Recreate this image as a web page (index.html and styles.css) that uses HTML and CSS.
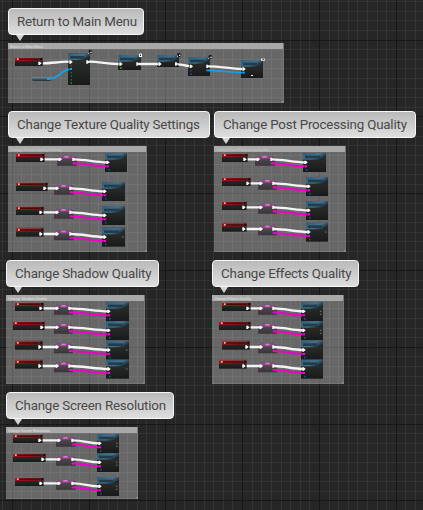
FILE: index.html
```html
<!DOCTYPE html>
<html lang="en">
<head>
<meta charset="utf-8">
<title>Event Graph</title>
<link rel="stylesheet" href="styles.css">
</head>
<body>
<main class="canvas" id="canvas">
  <svg class="layer" id="grid" viewBox="0 0 423 510"></svg>
</main>
<script src="graph.js"></script>
</body>
</html>
```
FILE: styles.css
```css
body { margin: 0; background: #262626; overflow: hidden; }
.canvas { position: relative; width: 423px; height: 510px; overflow: hidden; background: #262626; font-family: Roboto, "Liberation Sans", sans-serif; }
.layer { position: absolute; left: 0; top: 0; width: 423px; height: 510px; display: block; }
.minor { fill: #343434; }
.major { fill: #171717; }
.frame { position: absolute; box-sizing: border-box; background: rgba(255, 255, 255, 0.3); border-right: 1px solid rgba(160, 160, 160, 0.25); border-bottom: 1px solid rgba(160, 160, 160, 0.25); }
.frame-head { height: 6px; background: #a9a9a9; }
.frame-title { fill: #e2e2e2; font: 3.6px Roboto, sans-serif; }
.frame-title.faint { opacity: 0.5; }
.frame-head svg { display: block; width: 100%; height: 6px; }
.bubble { position: absolute; box-sizing: border-box; height: 27px; border: 1px solid #f6f6f6; border-radius: 4px; background: linear-gradient(#b9b9b9, #dedede); color: #484848; font-size: 13.33px; line-height: 25px; padding-left: 8px; white-space: nowrap; letter-spacing: -0.19px; }
.bubble::after { content: ""; position: absolute; left: 7px; top: 26px; border: 4px solid transparent; border-top: 6px solid #d4d4d4; border-bottom: 0; }
.exec { stroke: #f4f4f4; stroke-width: 7; fill: none; }
.pink { stroke: #f000c8; stroke-width: 6; fill: none; }
.blue { stroke: #0ea5f0; stroke-width: 5; fill: none; }
.pin { fill: #fff; }
.pin-pink { fill: #ff00d8; }
.pin-blue { fill: #0ea5f0; }
.pin-dim { fill: #11577c; }
.pin-green { fill: #3c7226; }
.pin-teal { fill: #176650; }
.pin-purple { fill: #7d1770; }
.title-red { fill: #4b0b0c; }
.title-blue { fill: #233c4b; }
.title-pink { fill: #d67bc9; }
.edge { fill: #858585; }
.corner { fill: #1b0707; }
.dim-dot { fill: #888; }
.badge-dark { fill: #111; }
```
FILE: graph.js
```js
const canvas = document.getElementById('canvas');
const rect = (x, y, w, h, c, extra = '') => `<rect x="${x}" y="${y}" width="${w}" height="${h}" class="${c}" ${extra}/>`;

// Background grid: a major line every eighth minor line
let minor = '', major = '';
for (let k = -5; k < 56; k++) {
  const x = Math.floor(12.2 + 9.6 * k), y = Math.floor(40 + 9.6 * k);
  const m = k % 8 === 0;
  const s = rect(x, 0, 1, 510, m ? 'major' : 'minor') + rect(0, y, 423, 1, m ? 'major' : 'minor');
  if (m) major += s; else minor += s;
}
document.getElementById('grid').innerHTML = minor + major;

// Comments: title, bubble x, y, width, frame width, frame height, small title width, small title style
const comments = [
  ['Return to Main Menu', 8, 8, 136, 276, 60, 33, ''],
  ['Change Texture Quality Settings', 8, 111, 202, 139, 106, 52, 'faint'],
  ['Change Post Processing Quality', 214, 111, 202, 132, 106, 53, 'faint'],
  ['Change Shadow Quality', 6, 260, 153, 139, 89, 39, ''],
  ['Change Effects Quality', 212, 260, 147, 132, 89, 37, ''],
  ['Change Screen Resolution', 6, 392, 168, 132, 72, 42, '']
];
let html = '';
for (const [t, x, y, w, fw, fh, tw, c] of comments) {
  html += `<div class="frame" style="left:${x}px;top:${y + 35}px;width:${fw}px;height:${fh}px"><div class="frame-head"><svg><text class="frame-title ${c}" x="2" y="4.8" textLength="${tw}" lengthAdjust="spacingAndGlyphs">${t}</text></svg></div></div>`;
  html += `<div class="bubble" style="left:${x}px;top:${y}px;width:${w}px">${t}</div>`;
}
canvas.insertAdjacentHTML('beforeend', html);

// Nodes live in graph units, three per pixel
const arrow = (x, y) => `<path class="pin" d="M${x - 4} ${y - 5}h4l6 5-6 5h-4z"/>`;
const event = (x, y, w) =>
  rect(x, y, w, 27, '', 'fill="url(#dark)"') + rect(x, y, w, 12, '', 'fill="url(#red)"') +
  rect(x, y, w, 2, 'edge') + rect(x + 12, y + 5, w - 24, 4, 'title-red') +
  rect(x + 6, y + 4, 5, 5, 'pin', 'opacity=".7"') + rect(x + w - 7, y + 3, 5, 6, 'corner') + arrow(x + w - 9, y + 19);
const macro = (x, y, w) =>
  rect(x, y, w, 30, '', 'fill="url(#macro)" rx="2"') + rect(x + 8, y + 1, w - 16, 8, '', 'fill="#8b4a84"') +
  rect(x + 22, y + 1, 13, 5, 'title-pink') +
  rect(x, y, 4, 3, 'edge') + rect(x + w - 4, y, 4, 3, 'edge') +
  rect(x + 6, y + 21, 5, 5, 'pin-purple') + arrow(x + 9, y + 11) + arrow(x + w - 10, y + 11) +
  rect(x + w - 13, y + 21, 9, 5, 'pin-pink');
const call = (x, y, w, h) =>
  rect(x, y, w, h, '', 'fill="url(#dark)"') + rect(x, y, w, 20, '', 'fill="url(#steel)"') +
  rect(x + 6, y + 8, w - 24, 8, 'title-blue');

const rows = [
  [48, 459, 86, 171, 60, 315, 66, 0], [48, 546, 95, 162, 60, 306, 69, 0],
  [48, 618, 83, 162, 60, 306, 69, 0], [48, 683, 83, 162, 60, 306, 69, 1],
  [666, 459, 77, 765, 60, 909, 69, 0], [666, 531, 86, 774, 57, 918, 66, 0],
  [666, 603, 74, 774, 57, 918, 66, 0], [666, 668, 74, 774, 57, 918, 66, 1],
  [45, 906, 86, 162, 57, 318, 69, 0], [39, 963, 95, 162, 57, 318, 69, 0],
  [45, 1022, 83, 162, 57, 318, 69, 1], [45, 1079, 83, 162, 57, 318, 69, 1],
  [666, 906, 86, 774, 57, 903, 66, 2], [657, 963, 95, 774, 57, 903, 66, 2],
  [666, 1022, 83, 774, 57, 903, 66, 0], [657, 1079, 83, 774, 57, 903, 66, 0],
  [39, 1302, 89, 168, 60, 291, 66, 2], [39, 1359, 98, 168, 60, 291, 66, 2],
  [45, 1431, 86, 168, 60, 291, 66, 2]
];
let g = `<defs>
<linearGradient id="dark" x2="0" y2="1"><stop stop-color="#303330"/><stop offset="1" stop-color="#171a18"/></linearGradient>
<linearGradient id="red"><stop stop-color="#a81415"/><stop offset=".55" stop-color="#851315"/><stop offset="1" stop-color="#4f2020"/></linearGradient>
<linearGradient id="steel" x2="1" y2=".5"><stop stop-color="#2f5e79"/><stop offset=".65" stop-color="#44708a"/><stop offset="1" stop-color="#20292d"/></linearGradient>
<linearGradient id="macro" x2="0" y2="1"><stop stop-color="#6b5569"/><stop offset=".4" stop-color="#4b454b"/><stop offset="1" stop-color="#363636"/></linearGradient>
<linearGradient id="var" x2="0" y2="1"><stop stop-color="#7a929d"/><stop offset=".5" stop-color="#3e5c6a"/><stop offset="1" stop-color="#252c30"/></linearGradient>
</defs>`;
for (const [ex, y, ew, mx, mw, nx, nw, dots] of rows) {
  const mo = mx + mw - 8;
  g += event(ex, y, ew) + macro(mx, y + 8, mw) + call(nx, y, nw, 57);
  g += `<path class="exec" d="M${ex + ew} ${y + 19}H${mx + 8}M${mo} ${y + 19}C${mo + 30} ${y + 19} ${nx - 24} ${y + 28} ${nx + 5} ${y + 28}"/>`;
  g += `<path class="pink" d="M${mo - 2} ${y + 31}C${mo + 30} ${y + 31} ${nx - 24} ${y + 40} ${nx + 5} ${y + 40}"/>`;
  g += arrow(nx + 8, y + 28) + rect(nx + 6, y + 37, 6, 6, 'pin-pink') + rect(nx + 9, y + 48, 5, 5, 'pin-dim');
  if (dots) g += rect(nx + nw - 8, y + 26, 3, 4, 'dim-dot');
  if (dots === 2) g += rect(nx + nw - 8, y + 35, 3, 4, 'dim-dot');
}

// Return to Main Menu chain
g += event(45, 171, 83) + rect(96, 231, 59, 12, '', 'rx="5" fill="url(#var)"');
g += call(204, 160, 66, 95) + call(354, 165, 69, 45) + call(471, 165, 66, 36) + call(564, 171, 66, 57) + call(723, 180, 66, 54);
g += '<path class="exec" d="M129 190C155 190 180 185 206 185M267 185C298 185 325 192 356 192M417 192H474M534 193C546 193 556 198 567 198M627 199C660 199 695 207 726 207"/>';
g += '<path class="blue" d="M146 237C180 235 180 211 207 208M619 211C655 211 695 218 728 218"/>';
for (const [x, y] of [[212, 186], [263, 186], [362, 192], [413, 192], [479, 192], [529, 192], [573, 199], [623, 199], [731, 207]]) g += arrow(x, y);
g += rect(141, 234, 7, 6, 'pin-blue') + rect(209, 204, 7, 6, 'pin-blue') + rect(728, 215, 6, 6, 'pin-blue');
g += rect(212, 216, 4, 5, 'pin-teal') + rect(212, 226, 4, 5, 'pin-teal') + rect(212, 237, 4, 5, 'pin-teal') + rect(212, 246, 4, 6, 'pin-green') + rect(212, 195, 4, 4, 'pin-teal');
g += rect(360, 201, 6, 6, 'pin-green') + rect(571, 210, 4, 5, 'pin-purple') + rect(571, 220, 5, 5, 'pin-dim') + rect(753, 225, 6, 3, 'pin');
for (const [x, y] of [[271, 156], [537, 165], [631, 171]]) g += `<circle class="badge-dark" cx="${x}" cy="${y}" r="6"/>` + rect(x, y - 1, 4, 4, 'pin') + rect(x - 6, y + 2, 3, 3, 'pin');
g += rect(417, 161, 9, 10, 'pin') + rect(420, 164, 3, 4, 'badge-dark') + rect(783, 176, 12, 6, 'pin') + rect(787, 178, 6, 2, 'badge-dark');
for (const [, x, y, , fw, fh] of comments) g += rect((x + fw) * 3 - 5, (y + 35 + fh) * 3 - 5, 3, 3, 'pin', 'opacity=".55"');
canvas.insertAdjacentHTML('beforeend', `<svg class="layer" viewBox="0 0 1269 1530">${g}</svg>`);
```
